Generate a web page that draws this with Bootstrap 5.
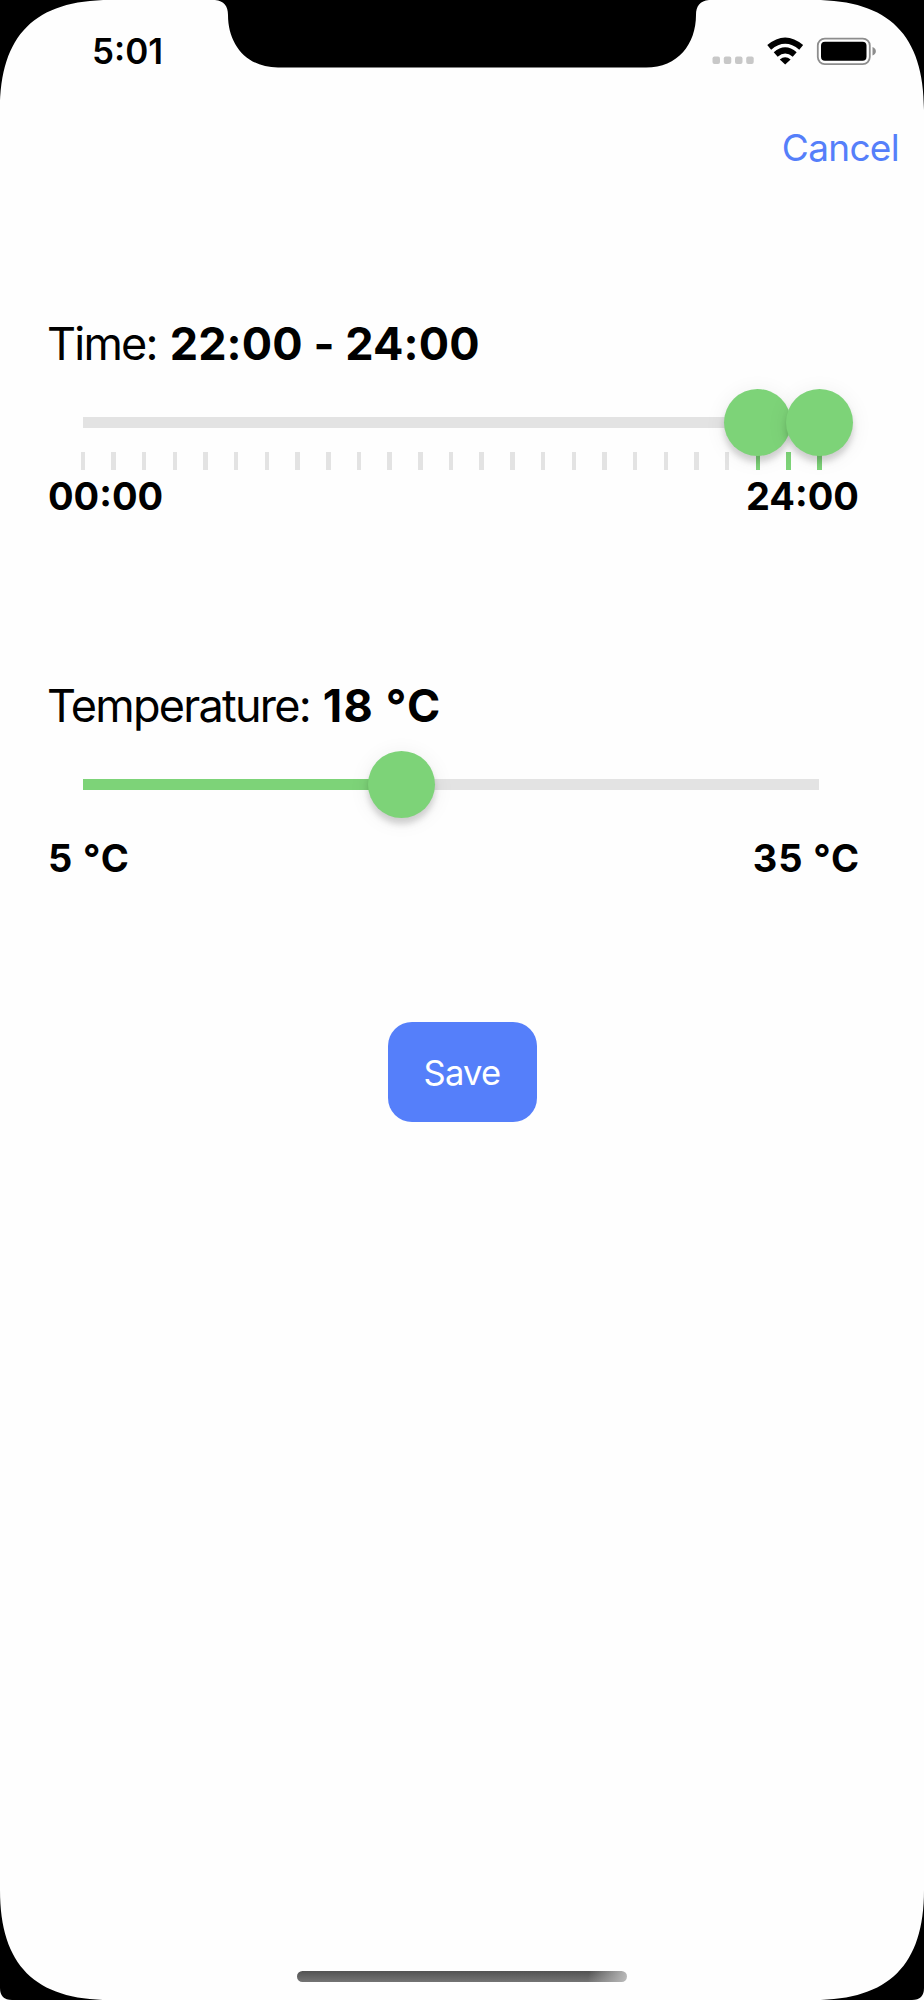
<!DOCTYPE html>
<html lang="en">
<head>
<meta charset="utf-8">
<meta name="viewport" content="width=device-width, initial-scale=1">
<title>Schedule</title>
<link href="https://cdn.jsdelivr.net/npm/bootstrap@5.3.0/dist/css/bootstrap.min.css" rel="stylesheet">
<style>
:root{--accent:#557ffa;--leaf:#7dd378;--rail:#e3e3e3}
body{font-family:Inter,"Liberation Sans",sans-serif;color:#000;background:#fff}
.phone{width:924px;height:2000px;background:#fefefe}
.bezel{z-index:5;pointer-events:none}
.status{height:104px;padding:0 47px 0 92px}
.clock{font-size:35px;line-height:103px;font-weight:600}
.topbar{height:88px;padding-right:25px}
.cancel{color:var(--accent);font-size:37px;line-height:88px;letter-spacing:-.7px}
.setting{padding:0 66px 0 48px}
.time-set{margin-top:120px}
.temp-set{margin-top:153px}
.heading{font-size:45px;line-height:64px;font-weight:400;white-space:pre;margin-left:-1px}
.lbl{letter-spacing:-1.75px}
.heading strong{font-weight:700;margin-left:2px;letter-spacing:.1px}
.heading .degrees{letter-spacing:1.2px}
.slider{height:96px;margin:1px 39px 0 35px}
.rail{height:11px;background:var(--rail);top:40px}
.fill{height:11px;background:var(--leaf)}
.knob{width:67px;height:67px;margin-left:-33.5px;top:12px;background:var(--leaf);box-shadow:0 6px 6px rgba(0,0,0,.16),0 3px 22px rgba(0,0,0,.07)}
.ticks{top:75px;left:-2.5px;right:-2.5px}
.tick{width:4.5px;height:18px;background:var(--rail)}
.tick.on{background:var(--leaf)}
.ends{font-size:38px;line-height:50px;font-weight:700;margin:-2px -1px 0 0}
.ends.degrees{letter-spacing:.9px;margin-right:-2px}
.save{width:149px;height:100px;border-radius:24px;background:var(--accent);color:#fff;font-size:34.5px;letter-spacing:-.7px;padding-top:2px;margin-top:139px}
.home{width:330px;height:11px;margin-bottom:18px;background:linear-gradient(100deg,transparent 88%,#bbb),linear-gradient(#525252,#747474)}
</style>
</head>
<body>
<main class="phone position-relative overflow-hidden d-flex flex-column">
<svg class="bezel position-absolute top-0 start-0" width="924" height="2000" viewBox="0 0 924 2000" aria-hidden="true">
<path d="M0 0H110C35 0 0 35 0 110Z"/>
<path d="M924 0H814C889 0 924 35 924 110Z"/>
<path d="M215 0C224 1 228 6 228 15C228 44 246 67.500 278 67.500H646C678 67.500 696 44 696 15C696 6 700 1 709 0Z"/>
<path d="M0 1890C0 1965 35 2000 110 2000H12Q0 2000 0 1988Z"/>
<path d="M924 1890C924 1965 889 2000 814 2000H912Q924 2000 924 1988Z"/>
</svg>
<header class="status d-flex justify-content-between">
<div class="clock">5:01</div>
<svg width="166" height="104" viewBox="711 0 166 104" aria-label="Status">
<g fill="#c8c8c8"><rect x="712.500" y="56.500" width="7.500" height="7.500" rx="2"/><rect x="723.800" y="56.500" width="7.500" height="7.500" rx="2"/><rect x="735" y="56.500" width="7.500" height="7.500" rx="2"/><rect x="746.200" y="56.500" width="7.500" height="7.500" rx="2"/></g>
<g fill="none" stroke="#000" stroke-width="6"><path d="M769.200 47.400Q785.200 33.800 801.200 47.400"/><path d="M775.700 54.400Q785.200 46.200 794.700 54.400"/></g><path d="M779.800 59.400Q785.200 55 790.600 59.400L785.200 64.500Z"/>
<rect x="817.800" y="38.600" width="52" height="25.500" rx="7" fill="none" stroke="#8d8d8d" stroke-width="1.800"/>
<rect x="821" y="41.800" width="45.500" height="19" rx="4"/>
<path d="M872.500 47C877 48.500 877 54 872.500 55.500Z" fill="#8d8d8d"/>
</svg>
</header>
<nav class="topbar d-flex justify-content-end"><a class="cancel text-decoration-none" href="#">Cancel</a></nav>
<section class="setting time-set">
<div class="heading"><span class="lbl">Time: </span><strong>22:00 - 24:00</strong></div>
<div class="slider position-relative" id="time">
<div class="rail position-absolute w-100"></div>
<div class="ticks position-absolute d-flex justify-content-between"></div>
<div class="knob rounded-circle position-absolute" style="left:91.67%"></div>
<div class="knob rounded-circle position-absolute" style="left:100%"></div>
</div>
<div class="ends d-flex justify-content-between"><span>00:00</span><span>24:00</span></div>
</section>
<section class="setting temp-set">
<div class="heading"><span class="lbl">Temperature: </span><strong class="degrees">18 °C</strong></div>
<div class="slider position-relative">
<div class="rail position-absolute w-100"><div class="fill" style="width:43.33%"></div></div>
<div class="knob rounded-circle position-absolute" style="left:43.33%"></div>
</div>
<div class="ends degrees d-flex justify-content-between"><span>5 °C</span><span>35 °C</span></div>
</section>
<button class="save btn border-0 align-self-center px-0 pb-0" type="button">Save</button>
<div class="home rounded-pill mt-auto align-self-center"></div>
</main>
<script src="https://cdn.jsdelivr.net/npm/bootstrap@5.3.0/dist/js/bootstrap.bundle.min.js"></script>
<script>
const ticks=document.querySelector('#time .ticks');
for(let h=0;h<=24;h++){const t=document.createElement('span');t.className='tick'+(h>=22?' on':'');ticks.append(t)}
</script>
</body>
</html>
